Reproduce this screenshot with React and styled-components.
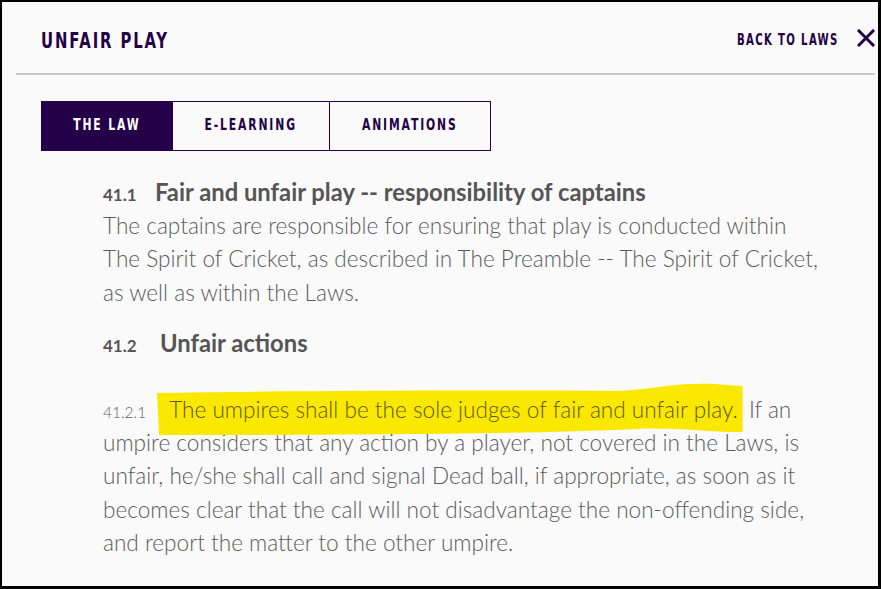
import React from "react";
import styled, { createGlobalStyle } from "styled-components";

const Global = createGlobalStyle`
  html, body { margin: 0; padding: 0; background: #000; }
  body { width: 881px; height: 589px; overflow: hidden; }
`;

const PURPLE = "#230047";
const NARROW = `"Liberation Sans Narrow", "DejaVu Sans Condensed", "Liberation Sans", sans-serif`;

const Frame = styled.div`
  box-sizing: border-box;
  width: 881px;
  height: 589px;
  border-style: solid;
  border-color: #000;
  border-width: 2px 3px 3px 2px;
  background: #fafafa;
  display: flex;
  flex-direction: column;
  overflow: hidden;
`;

const Header = styled.header`
  display: flex;
  align-items: center;
  justify-content: space-between;
  height: 71px;
  padding: 5px 3px 0 39px;
  box-sizing: border-box;
`;

const Condensed = styled.span`
  display: inline-block;
  white-space: nowrap;
  transform: scaleX(0.75);
  transform-origin: ${(p) => p.$origin || "center"};
`;

const Title = styled.h1`
  margin: 0;
  font-family: ${NARROW};
  font-weight: 700;
  font-size: 22px;
  letter-spacing: 2.5px;
  color: ${PURPLE};
`;

const BackLink = styled.a`
  display: flex;
  align-items: center;
  gap: 18px;
  font-family: ${NARROW};
  font-weight: 700;
  font-size: 15px;
  letter-spacing: 1.8px;
  color: ${PURPLE};
  text-decoration: none;
`;

const CloseSvg = styled.svg`
  margin-top: -4px;
`;

const Divider = styled.hr`
  margin: 0 3px 0 14px;
  border: 0;
  height: 2px;
  background: #c8c8c8;
`;

const Tabs = styled.nav`
  display: flex;
  margin: 26px 0 0 39px;
`;

const Tab = styled.button`
  box-sizing: border-box;
  height: 50px;
  width: ${(p) => p.$w}px;
  border: 1px solid ${PURPLE};
  margin-left: ${(p) => (p.$first ? 0 : -1)}px;
  background: ${(p) => (p.$active ? PURPLE : "transparent")};
  color: ${(p) => (p.$active ? "#fff" : PURPLE)};
  font-family: ${NARROW};
  font-weight: 700;
  font-size: 16px;
  letter-spacing: 2.5px;
  padding: 0 0 4px;
  cursor: pointer;
`;

const Content = styled.article`
  padding: 25px 51px 0 101px;
  font-family: Lato, "Open Sans", sans-serif;
  color: #666;
`;

const SectionHead = styled.h2`
  margin: ${(p) => p.$mt || 0}px 0 0;
  display: flex;
  align-items: baseline;
  font-family: Lato, sans-serif;
  font-weight: 700;
  font-size: 23.8px;
  line-height: 33px;
  color: #555;
`;

const HeadNum = styled.span`
  font-size: 17px;
  line-height: 1;
  width: ${(p) => p.$w}px;
  flex: none;
`;

const Para = styled.p`
  margin: ${(p) => p.$mt || 0}px 0 0;
  font-size: 22.6px;
  font-weight: 300;
  line-height: 33.3px;
  color: #5c5c5c;
`;

const SubNum = styled.span`
  font-size: 15.5px;
  line-height: 1;
  margin-right: 11px;
`;

const Highlight = styled.mark`
  position: relative;
  background: transparent;
  color: #5e5900;
  padding: 0 5px 0 12px;
  z-index: 0;
`;

const HighlightShape = styled.svg`
  position: absolute;
  left: 0;
  top: -13px;
  width: 100%;
  height: 53px;
  z-index: -1;
`;

const CloseIcon = () => (
  <CloseSvg width="18" height="18" viewBox="0 0 18 18">
    <path d="M2 2 L16 16 M16 2 L2 16" stroke={PURPLE} strokeWidth="3" strokeLinecap="square" fill="none" />
  </CloseSvg>
);

export default function App() {
  return (
    <>
      <Global />
      <Frame>
        <Header>
          <Title>
            <Condensed $origin="left">UNFAIR PLAY</Condensed>
          </Title>
          <BackLink href="#">
            <Condensed $origin="right">BACK TO LAWS</Condensed>
            <CloseIcon />
          </BackLink>
        </Header>
        <Divider />
        <Tabs>
          <Tab $first $active $w={132}><Condensed>THE LAW</Condensed></Tab>
          <Tab $w={158}><Condensed>E-LEARNING</Condensed></Tab>
          <Tab $w={162}><Condensed>ANIMATIONS</Condensed></Tab>
        </Tabs>
        <Content>
          <SectionHead>
            <HeadNum $w={52}>41.1</HeadNum>
            Fair and unfair play -- responsibility of captains
          </SectionHead>
          <Para>
            The captains are responsible for ensuring that play is conducted within
            The Spirit of Cricket, as described in The Preamble -- The Spirit of Cricket,
            as well as within the Laws.
          </Para>
          <SectionHead $mt={18}>
            <HeadNum $w={57}>41.2</HeadNum>
            Unfair actions
          </SectionHead>
          <Para $mt={33}>
            <SubNum>41.2.1</SubNum>
            <Highlight>
              <HighlightShape viewBox="0 0 587 53" preserveAspectRatio="none" aria-hidden="true">
                <path
                  d="M0 10 C120 8 300 7 460 8 C500 6 520 0 540 1 C560 0 575 3 587 3 L587 49 C560 50 520 44 480 46 C350 52 150 52 2 52 Z"
                  fill="#fbe800"
                />
              </HighlightShape>
              The umpires shall be the sole judges of fair and unfair play.
            </Highlight>{" "}
            If an umpire considers that any action by a player, not covered in the Laws, is
            unfair, he/she shall call and signal Dead ball, if appropriate, as soon as it
            becomes clear that the call will not disadvantage the non-offending side,
            and report the matter to the other umpire.
          </Para>
        </Content>
      </Frame>
    </>
  );
}
